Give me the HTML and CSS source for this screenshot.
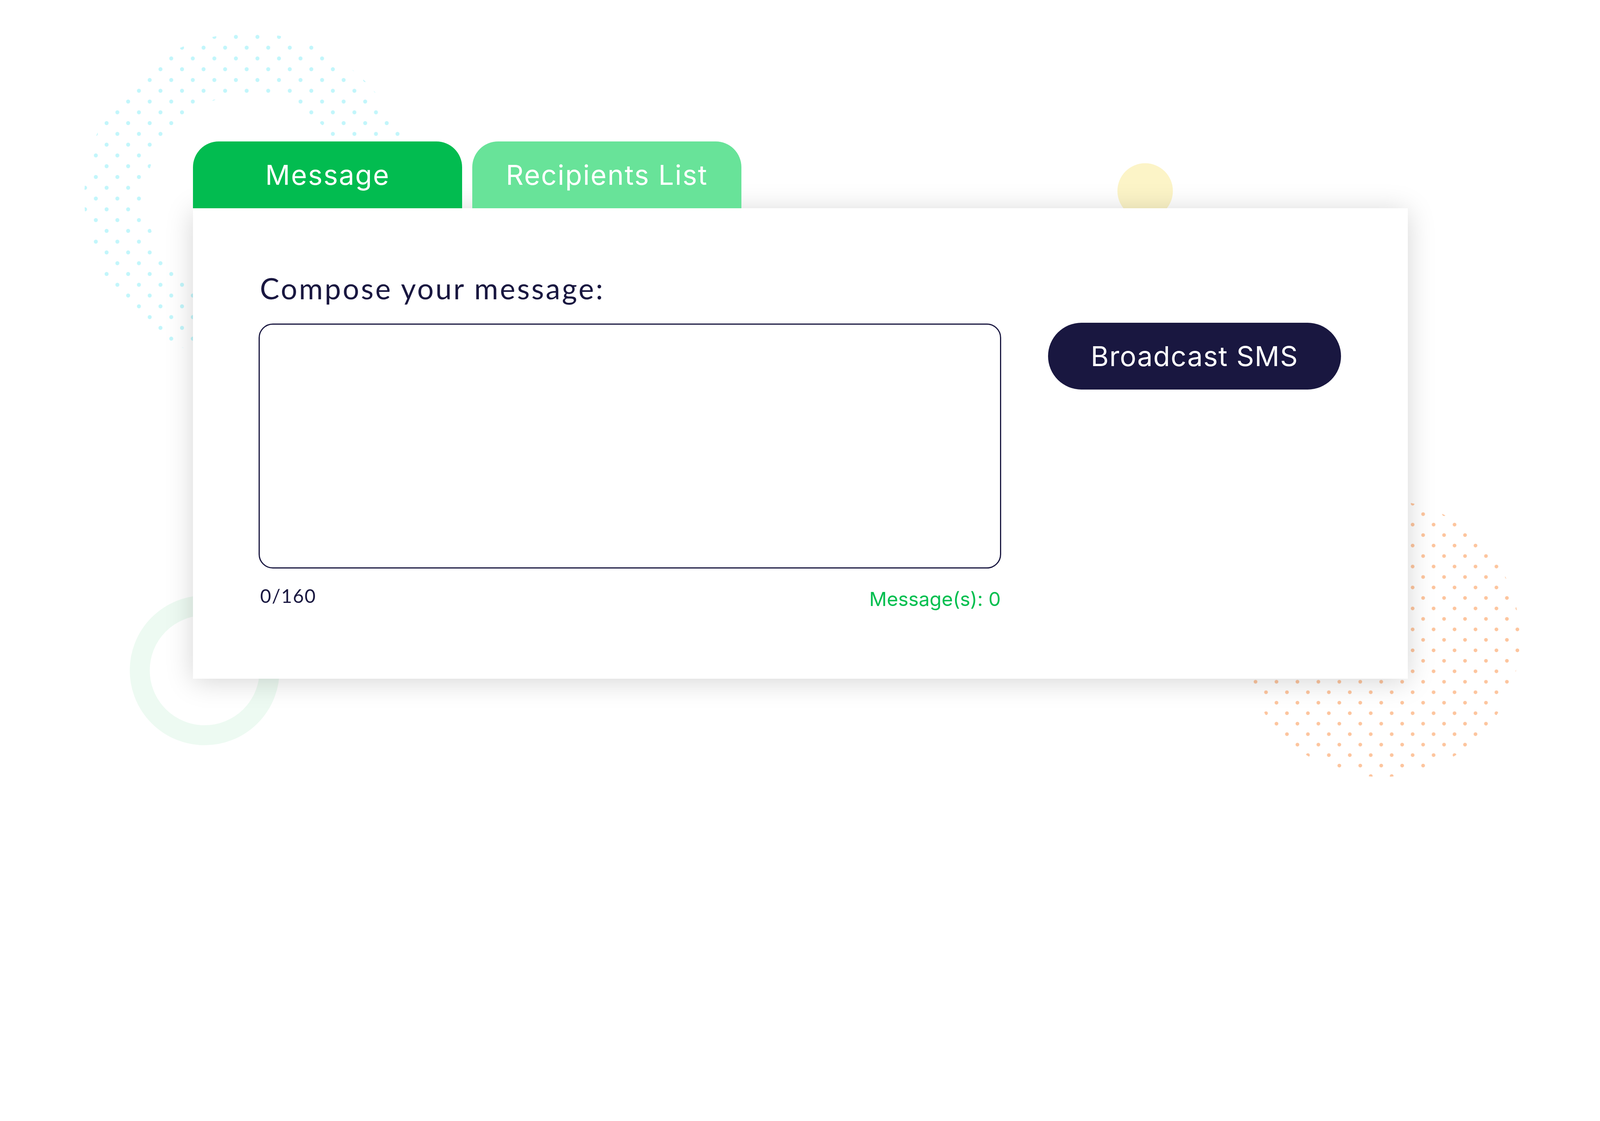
FILE: index.html
```html
<!DOCTYPE html>
<html lang="en">
<head>
<meta charset="utf-8">
<title>Broadcast SMS</title>
<link rel="stylesheet" href="styles.css">
</head>
<body>
<div class="scene">
  <svg class="decor" viewBox="0 0 5599 2869" preserveAspectRatio="xMinYMin meet" aria-hidden="true">
    <defs>
      <pattern id="cyanDots" patternUnits="userSpaceOnUse" x="731.15" y="110.15" width="75.4" height="75.4">
        <circle cx="18.85" cy="18.85" r="7" fill="#c2f6fb"/>
        <circle cx="56.55" cy="56.55" r="7" fill="#c2f6fb"/>
      </pattern>
      <pattern id="orangeDots" patternUnits="userSpaceOnUse" x="4924.7" y="1743.7" width="73.3" height="73.3">
        <circle cx="18.3" cy="18.3" r="6.5" fill="#fdc59e"/>
        <circle cx="54.95" cy="54.95" r="6.5" fill="#fdc59e"/>
      </pattern>
    </defs>
    <circle cx="870" cy="690" r="467.5" fill="none" stroke="url(#cyanDots)" stroke-width="215"/>
    <circle cx="4007" cy="668" r="97" fill="#fcf4c7"/>
    <circle cx="716" cy="2345" r="227" fill="none" stroke="#edfaf2" stroke-width="70"/>
    <circle cx="4833" cy="2233" r="485" fill="url(#orangeDots)"/>
  </svg>

  <main class="widget">
    <nav class="tabs">
      <div class="tab tab-active">Message</div>
      <div class="tab tab-idle">Recipients List</div>
    </nav>
    <section class="card">
      <label class="compose-label" for="msg">Compose your message:</label>
      <div class="compose-row">
        <div class="compose-col">
          <textarea id="msg" class="compose-box"></textarea>
          <div class="compose-footer">
            <span class="char-count">0/160</span>
            <span class="msg-count">Message(s): 0</span>
          </div>
        </div>
        <button class="broadcast-btn" type="button">Broadcast SMS</button>
      </div>
    </section>
  </main>
</div>
</body>
</html>
```

FILE: styles.css
```css
html, body {
  margin: 0;
  padding: 0;
  background: #ffffff;
}

.scene {
  position: relative;
  width: 4097px;
  height: 2099px;
  overflow: hidden;
  background: #ffffff;
}

.decor {
  position: absolute;
  top: 0;
  left: 0;
  width: 4097px;
  height: 2099px;
  z-index: 0;
}

.widget {
  position: relative;
  z-index: 1;
  padding: 361.5px 0 0 494px;
  display: flex;
  flex-direction: column;
  align-items: flex-start;
}

.tabs {
  position: relative;
  z-index: 2;
  display: flex;
  gap: 25.6px;
}

.tab {
  width: 689.3px;
  height: 171.2px;
  border-radius: 66px 66px 0 0;
  display: flex;
  align-items: center;
  justify-content: center;
  font-family: Inter, "Liberation Sans", sans-serif;
  font-size: 70.3px;
  letter-spacing: 2.4px;
  color: #ffffff;
}

.tab-active {
  background: #02bc50;
}

.tab-idle {
  background: #68e399;
}

.card {
  position: relative;
  z-index: 1;
  box-sizing: border-box;
  width: 3110px;
  height: 1204.5px;
  background: #ffffff;
  box-shadow: 0 7px 66px rgba(0, 0, 0, 0.17);
  padding: 161px 0 0 168.3px;
  display: flex;
  flex-direction: column;
  align-items: flex-start;
}

.compose-label {
  font-family: Lato, "Liberation Sans", sans-serif;
  font-size: 74.6px;
  line-height: 87.8px;
  letter-spacing: 4.4px;
  color: #191740;
  margin: 0 0 46.8px 2.9px;
}

.compose-row {
  display: flex;
  align-items: flex-start;
  gap: 120px;
}

.compose-col {
  display: flex;
  flex-direction: column;
  width: 1901px;
}

.compose-box {
  box-sizing: border-box;
  display: block;
  width: 1901px;
  height: 626.4px;
  margin: 0;
  border: 3px solid #191740;
  border-radius: 36.6px;
  background: #ffffff;
  resize: none;
  outline: none;
  padding: 30px;
  font-family: Lato, "Liberation Sans", sans-serif;
  font-size: 48px;
  color: #191740;
}

.compose-footer {
  display: flex;
  justify-content: space-between;
  align-items: flex-start;
  margin-top: 41.7px;
  padding: 0 1.5px 0 3.7px;
}

.char-count {
  font-family: Lato, "Liberation Sans", sans-serif;
  font-size: 48.3px;
  line-height: 1.2;
  letter-spacing: 2px;
  color: #191740;
}

.msg-count {
  font-family: Inter, "Liberation Sans", sans-serif;
  font-size: 49.8px;
  letter-spacing: 0;
  color: #00bf4f;
  margin-top: 6.6px;
}

.broadcast-btn {
  width: 749.4px;
  height: 171.2px;
  margin-top: -2.2px;
  border: none;
  border-radius: 86px;
  background: #191740;
  color: #ffffff;
  font-family: Inter, "Liberation Sans", sans-serif;
  font-size: 70.3px;
  letter-spacing: 1.6px;
  display: flex;
  align-items: center;
  justify-content: center;
  padding: 0;
  cursor: pointer;
}
```
